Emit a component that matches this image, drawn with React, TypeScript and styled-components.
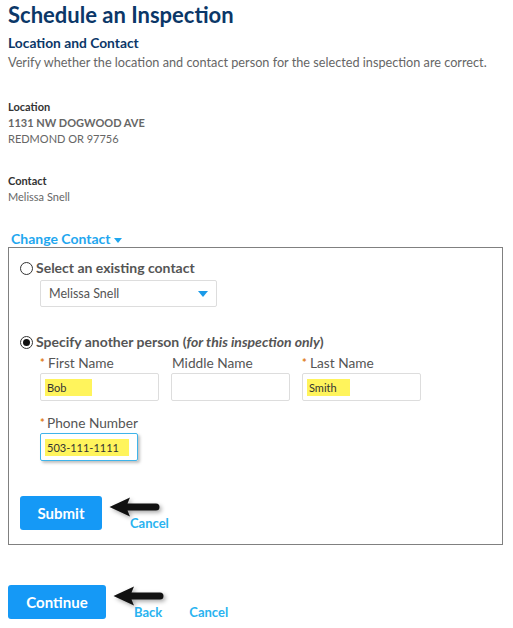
import React from "react";
import styled, { createGlobalStyle } from "styled-components";

const Global = createGlobalStyle`
  html, body { margin: 0; padding: 0; background: #fff; }
  body { font-family: Lato, "Open Sans", Arial, sans-serif; }
  * { box-sizing: border-box; }
`;

const Page = styled.div`
  width: 513px;
  height: 628px;
  padding: 0 8px;
  overflow: hidden;
`;

const Title = styled.h1`
  margin: 0;
  padding-top: 2px;
  font-size: 22px;
  line-height: 26px;
  font-weight: 700;
  color: #0b3768;
`;

const SubTitle = styled.h2`
  margin: 6px 0 0;
  font-size: 13.8px;
  line-height: 17px;
  font-weight: 700;
  color: #0b3768;
`;

const Intro = styled.p`
  margin: 3px 0 0;
  font-size: 12.7px;
  line-height: 16px;
  color: #666;
`;

const InfoBlock = styled.div<{ $top: number }>`
  margin-top: ${(p) => p.$top}px;
  display: flex;
  flex-direction: column;
`;

const InfoLabel = styled.div`
  font-size: 11px;
  line-height: 16px;
  font-weight: 700;
  color: #333;
`;

const InfoValue = styled.div<{ $bold?: boolean }>`
  font-size: 11px;
  line-height: 16px;
  font-weight: ${(p) => (p.$bold ? 700 : 400)};
  color: #666;
`;

const ChangeLink = styled.a`
  margin: 26px 0 0 3px;
  display: inline-flex;
  align-items: center;
  gap: 3px;
  font-size: 14px;
  line-height: 16px;
  font-weight: 700;
  color: #1fa7ef;
  text-decoration: none;
`;

const Caret = styled.span`
  width: 0;
  height: 0;
  border-left: 4.5px solid transparent;
  border-right: 4.5px solid transparent;
  border-top: 5px solid #1fa7ef;
  margin-top: 2px;
`;

const Box = styled.div`
  width: 495px;
  height: 298px;
  border: 1px solid #808080;
  padding: 12px 10px 0 11px;
  display: flex;
  flex-direction: column;
`;

const RadioRow = styled.label`
  display: flex;
  align-items: center;
  gap: 3px;
  font-size: 14px;
  line-height: 16px;
  font-weight: 700;
  color: #555;
`;

const Radio = styled.span<{ $checked?: boolean }>`
  width: 13px;
  height: 13px;
  border-radius: 50%;
  border: 1px solid #333;
  display: inline-flex;
  align-items: center;
  justify-content: center;
  background: #fff;
  &::after {
    content: "";
    width: 7px;
    height: 7px;
    border-radius: 50%;
    background: ${(p) => (p.$checked ? "#111" : "transparent")};
  }
`;

const Indented = styled.div`
  padding-left: 20px;
`;

const Select = styled.div`
  margin-top: 4px;
  width: 177px;
  height: 27px;
  border: 1px solid #ddd;
  border-radius: 2px;
  display: flex;
  align-items: center;
  justify-content: space-between;
  padding: 0 8px 0 8px;
  font-size: 12.5px;
  color: #555;
`;

const SelectArrow = styled.span`
  width: 0;
  height: 0;
  border-left: 5px solid transparent;
  border-right: 5px solid transparent;
  border-top: 6px solid #1a9ae8;
`;

const Spacer = styled.div<{ $h: number }>`
  height: ${(p) => p.$h}px;
  flex-shrink: 0;
`;

const FieldGrid = styled.div<{ $top: number }>`
  display: flex;
  gap: 12px;
  margin-top: ${(p) => p.$top}px;
`;

const Field = styled.div<{ $w: number }>`
  width: ${(p) => p.$w}px;
  display: flex;
  flex-direction: column;
`;

const FieldLabel = styled.div`
  font-size: 13.7px;
  line-height: 16px;
  color: #555;
  display: flex;
  align-items: center;
  height: 17px;
  white-space: nowrap;
`;

const Req = styled.span`
  color: #e07b12;
  font-size: 11px;
  width: 7px;
  margin-right: 1px;
  font-weight: 700;
`;

const NoReq = styled.span`
  width: 1px;
`;

const Input = styled.div<{ $focus?: boolean }>`
  margin-top: 2px;
  height: 28px;
  border: 1px solid ${(p) => (p.$focus ? "#3fb4ea" : "#ddd")};
  border-radius: 2px;
  box-shadow: ${(p) => (p.$focus ? "2px 2px 3px rgba(0,0,0,0.25)" : "none")};
  display: flex;
  align-items: center;
  padding-left: 4px;
`;

const Filled = styled.span<{ $w: number }>`
  display: inline-block;
  width: ${(p) => p.$w}px;
  height: 17px;
  line-height: 17px;
  background: #fff45c;
  font-size: 11px;
  color: #333;
  padding-left: 2px;
`;

const ButtonRow = styled.div<{ $top: number }>`
  margin-top: ${(p) => p.$top}px;
  display: flex;
  align-items: flex-start;
`;

const Button = styled.button<{ $w: number }>`
  width: ${(p) => p.$w}px;
  height: 34px;
  border: none;
  border-radius: 3px;
  background: #1599f6;
  color: #fff;
  font-family: Lato, "Open Sans", Arial, sans-serif;
  font-size: 15px;
  font-weight: 700;
  padding: 0;
`;

const Pointer = styled.div`
  position: relative;
  width: 0;
`;

const ArrowSvg = styled.svg`
  position: absolute;
  left: 6px;
  top: 0px;
  filter: drop-shadow(2px 2px 2px rgba(0, 0, 0, 0.35));
`;

const Link = styled.a<{ $ml: number }>`
  margin-left: ${(p) => p.$ml}px;
  margin-top: 19px;
  font-size: 13px;
  line-height: 16px;
  font-weight: 700;
  color: #29b3f0;
  text-decoration: none;
`;

function Arrow() {
  return (
    <ArrowSvg width="56" height="24" viewBox="0 0 56 24">
      <path
        d="M1.5 11 L22 1.5 L19.5 7.4 L48 7.4 Q51.5 7.4 51.5 11 Q51.5 14.6 48 14.6 L19.5 14.6 L22 20.5 Z"
        fill="#111"
      />
    </ArrowSvg>
  );
}

export default function App() {
  return (
    <Page>
      <Global />
      <Title>Schedule an Inspection</Title>
      <SubTitle>Location and Contact</SubTitle>
      <Intro>Verify whether the location and contact person for the selected inspection are correct.</Intro>

      <InfoBlock $top={29}>
        <InfoLabel>Location</InfoLabel>
        <InfoValue $bold>1131 NW DOGWOOD AVE</InfoValue>
        <InfoValue>REDMOND OR 97756</InfoValue>
      </InfoBlock>

      <InfoBlock $top={26}>
        <InfoLabel>Contact</InfoLabel>
        <InfoValue>Melissa Snell</InfoValue>
      </InfoBlock>

      <ChangeLink>
        Change Contact <Caret />
      </ChangeLink>

      <Box>
        <RadioRow>
          <Radio />
          Select an existing contact
        </RadioRow>
        <Indented>
          <Select>
            Melissa Snell
            <SelectArrow />
          </Select>
        </Indented>

        <Spacer $h={27} />

        <RadioRow>
          <Radio $checked />
          <span>
            Specify another person (<i>for this inspection only</i>)
          </span>
        </RadioRow>
        <Indented>
          <FieldGrid $top={4}>
            <Field $w={119}>
              <FieldLabel>
                <Req>*</Req>First Name
              </FieldLabel>
              <Input>
                <Filled $w={47}>Bob</Filled>
              </Input>
            </Field>
            <Field $w={119}>
              <FieldLabel>
                <NoReq />
                Middle Name
              </FieldLabel>
              <Input />
            </Field>
            <Field $w={119}>
              <FieldLabel>
                <Req>*</Req>Last Name
              </FieldLabel>
              <Input>
                <Filled $w={43}>Smith</Filled>
              </Input>
            </Field>
          </FieldGrid>
          <FieldGrid $top={13}>
            <Field $w={98}>
              <FieldLabel>
                <Req>*</Req>Phone Number
              </FieldLabel>
              <Input $focus>
                <Filled $w={84}>503-111-1111</Filled>
              </Input>
            </Field>
          </FieldGrid>
        </Indented>

        <ButtonRow $top={35}>
          <Button $w={82}>Submit</Button>
          <Pointer>
            <Arrow />
          </Pointer>
          <Link $ml={28}>Cancel</Link>
        </ButtonRow>
      </Box>

      <ButtonRow $top={40}>
        <Button $w={98}>Continue</Button>
        <Pointer>
          <Arrow />
        </Pointer>
        <Link $ml={28}>Back</Link>
        <Link $ml={27}>Cancel</Link>
      </ButtonRow>
    </Page>
  );
}
